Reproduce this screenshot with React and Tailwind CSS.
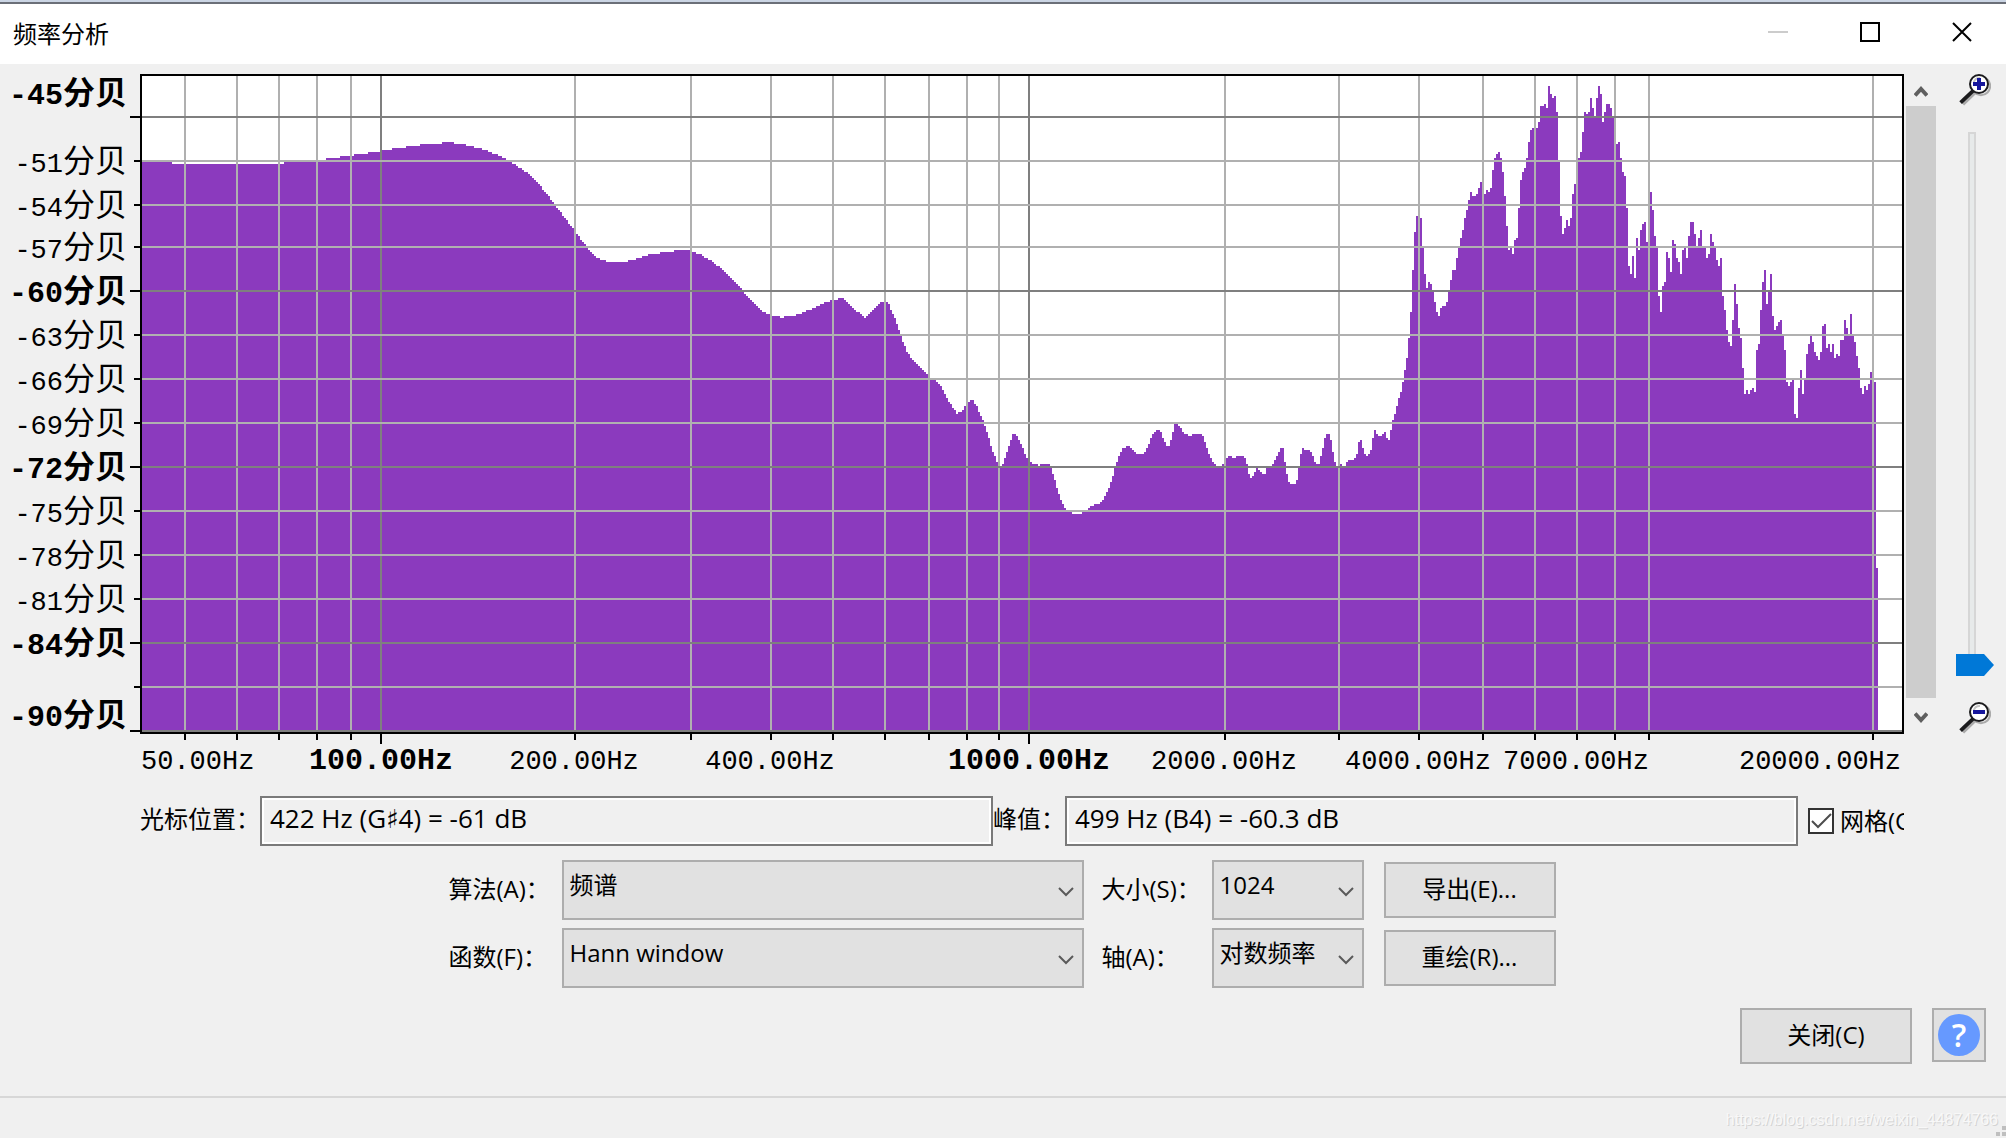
import React, { useState } from "react";

// [column, top] runs of the spectrum, two device pixels per unit
const SPECTRUM = [
  [71, 81], [86, 82], [142, 81], [163, 79], [170, 78], [177, 77], [184, 76], [191, 75], [196, 74], [203, 73],
  [210, 72], [221, 71], [227, 72], [233, 73], [237, 74], [241, 75], [244, 76], [246, 77], [249, 78], [251, 79],
  [253, 80], [256, 82], [258, 83], [259, 84], [261, 85], [262, 86], [264, 87], [265, 88], [266, 89], [267, 90],
  [268, 91], [269, 92], [270, 93], [271, 95], [272, 96], [273, 97], [274, 98], [275, 100], [276, 101], [277, 102],
  [278, 104], [279, 105], [280, 106], [281, 108], [282, 109], [283, 110], [284, 112], [285, 113], [286, 114],
  [287, 115], [288, 117], [289, 118], [290, 120], [291, 121], [292, 122], [293, 123], [294, 125], [295, 126],
  [296, 127], [297, 128], [298, 129], [300, 130], [303, 131], [314, 130], [318, 129], [321, 128], [324, 127],
  [330, 126], [337, 125], [346, 126], [348, 127], [351, 128], [352, 129], [354, 130], [356, 131], [357, 132],
  [358, 133], [360, 134], [361, 135], [362, 136], [363, 137], [364, 138], [365, 139], [366, 140], [367, 141],
  [368, 142], [369, 143], [370, 144], [371, 145], [372, 147], [373, 148], [374, 149], [375, 150], [376, 151],
  [377, 152], [378, 153], [379, 154], [380, 155], [381, 156], [383, 157], [386, 158], [390, 159], [392, 158],
  [398, 157], [401, 156], [403, 155], [406, 154], [408, 153], [410, 152], [412, 151], [415, 150], [419, 149],
  [422, 150], [423, 151], [424, 152], [425, 153], [426, 154], [427, 155], [428, 156], [430, 157], [431, 158],
  [432, 159], [433, 158], [434, 157], [435, 156], [436, 155], [437, 154], [438, 153], [439, 152], [440, 151],
  [444, 152], [445, 155], [446, 157], [447, 159], [448, 162], [449, 165], [450, 167], [451, 171], [452, 173],
  [453, 176], [454, 177], [455, 179], [456, 180], [457, 181], [458, 182], [459, 183], [460, 184], [461, 185],
  [462, 186], [463, 187], [464, 188], [465, 189], [468, 191], [469, 192], [470, 193], [471, 195], [472, 197],
  [473, 199], [474, 201], [475, 202], [476, 204], [477, 205], [478, 207], [479, 206], [481, 205], [482, 203],
  [483, 202], [484, 201], [485, 200], [487, 202], [488, 203], [489, 206], [490, 208], [491, 210], [492, 213],
  [493, 216], [494, 219], [495, 223], [496, 226], [497, 228], [498, 231], [499, 233], [501, 232], [502, 229],
  [503, 226], [504, 223], [505, 220], [506, 217], [508, 218], [509, 220], [510, 222], [511, 224], [512, 227],
  [513, 229], [515, 231], [516, 232], [519, 233], [520, 232], [525, 233], [526, 237], [527, 240], [528, 244],
  [529, 247], [530, 250], [531, 252], [532, 254], [533, 255], [536, 257], [541, 256], [542, 255], [544, 254],
  [545, 253], [547, 252], [550, 251], [551, 250], [552, 248], [553, 246], [554, 244], [555, 241], [556, 238],
  [557, 234], [558, 231], [559, 228], [560, 226], [561, 224], [563, 223], [565, 224], [566, 225], [567, 226],
  [568, 227], [572, 226], [573, 224], [574, 222], [575, 219], [576, 217], [577, 216], [578, 215], [580, 216],
  [581, 219], [582, 221], [583, 223], [585, 220], [586, 216], [587, 212], [589, 213], [590, 214], [591, 216],
  [592, 217], [594, 218], [596, 217], [601, 218], [602, 221], [603, 224], [604, 227], [605, 229], [606, 231],
  [607, 232], [608, 233], [611, 232], [613, 229], [614, 228], [616, 229], [618, 228], [622, 229], [623, 232],
  [624, 237], [625, 239], [626, 238], [627, 236], [628, 234], [629, 235], [630, 236], [631, 237], [633, 234],
  [636, 232], [637, 230], [638, 228], [639, 226], [640, 224], [642, 231], [643, 237], [644, 241], [645, 242],
  [648, 240], [649, 234], [650, 227], [651, 224], [652, 225], [655, 226], [656, 228], [657, 231], [658, 232],
  [660, 228], [661, 224], [662, 219], [663, 217], [665, 220], [666, 226], [667, 231], [668, 233], [670, 232],
  [671, 233], [673, 231], [674, 230], [677, 229], [678, 227], [679, 221], [680, 220], [681, 224], [682, 227],
  [683, 228], [684, 227], [685, 225], [686, 219], [687, 215], [688, 217], [689, 218], [691, 217], [692, 216],
  [693, 219], [694, 220], [695, 215], [696, 210], [697, 207], [698, 203], [699, 199], [700, 196], [701, 191],
  [702, 185], [703, 179], [704, 169], [705, 156], [706, 135], [707, 116], [708, 108], [710, 109], [711, 123],
  [712, 137], [713, 144], [714, 141], [715, 142], [716, 145], [717, 151], [718, 156], [719, 158], [720, 154],
  [721, 153], [723, 151], [724, 145], [725, 140], [726, 135], [728, 129], [729, 124], [730, 119], [731, 115],
  [732, 109], [733, 105], [734, 100], [735, 96], [736, 98], [738, 97], [739, 94], [740, 91], [742, 97],
  [743, 95], [744, 96], [745, 94], [746, 85], [747, 79], [748, 77], [749, 76], [750, 79], [751, 86], [752, 98],
  [753, 113], [754, 125], [755, 124], [756, 127], [757, 120], [758, 119], [759, 104], [760, 90], [761, 86],
  [762, 84], [763, 79], [764, 71], [765, 65], [766, 64], [769, 61], [770, 53], [772, 52], [773, 54], [774, 43],
  [775, 47], [776, 49], [777, 48], [778, 56], [779, 81], [780, 108], [781, 117], [782, 114], [783, 110],
  [784, 113], [785, 109], [786, 97], [787, 92], [788, 85], [789, 79], [790, 76], [791, 66], [792, 56], [793, 57],
  [794, 56], [795, 49], [796, 54], [797, 58], [798, 49], [799, 43], [800, 47], [801, 61], [802, 56], [803, 52],
  [805, 54], [806, 58], [808, 72], [809, 71], [810, 79], [811, 86], [812, 88], [813, 104], [814, 133],
  [815, 137], [816, 128], [817, 139], [818, 119], [819, 125], [820, 115], [821, 112], [822, 111], [823, 121],
  [825, 96], [826, 105], [827, 118], [828, 124], [829, 148], [830, 156], [831, 143], [832, 141], [833, 126],
  [834, 129], [835, 136], [836, 120], [837, 122], [838, 129], [839, 131], [840, 137], [841, 125], [842, 124],
  [843, 129], [844, 118], [845, 111], [847, 117], [848, 123], [849, 119], [850, 115], [851, 124], [853, 129],
  [854, 127], [855, 117], [856, 121], [857, 124], [858, 130], [859, 133], [860, 129], [861, 148], [862, 155],
  [863, 165], [864, 171], [865, 173], [866, 160], [867, 142], [868, 152], [869, 164], [870, 169], [871, 184],
  [872, 197], [873, 195], [874, 197], [875, 195], [876, 194], [877, 196], [878, 175], [879, 172], [880, 155],
  [881, 141], [882, 135], [883, 152], [884, 146], [885, 137], [886, 158], [887, 165], [888, 163], [889, 161],
  [890, 160], [891, 168], [892, 175], [893, 191], [894, 193], [895, 191], [896, 190], [897, 207], [898, 209],
  [899, 194], [900, 185], [901, 197], [902, 190], [903, 177], [904, 172], [905, 168], [906, 171], [907, 176],
  [908, 178], [909, 180], [910, 176], [911, 163], [912, 162], [913, 174], [914, 172], [915, 176], [916, 172],
  [917, 179], [918, 177], [919, 178], [920, 170], [922, 160], [923, 164], [924, 168], [925, 157], [926, 168],
  [927, 171], [928, 178], [929, 184], [930, 194], [931, 197], [932, 193], [933, 195], [934, 192], [935, 186],
  [937, 191], [938, 284],
];

const SPECTRUM_PATH =
  "M71 366" + SPECTRUM.map(([x, y]) => `H${x}V${y}`).join("") + "H939V366Z";

const DB_LINES = [
  { y: 117, major: true },
  { y: 161, label: "-51", textY: 172 },
  { y: 205, label: "-54", textY: 216 },
  { y: 247, label: "-57", textY: 258 },
  { y: 291, label: "-60", textY: 302, major: true },
  { y: 335, label: "-63", textY: 346 },
  { y: 379, label: "-66", textY: 390 },
  { y: 423, label: "-69", textY: 434 },
  { y: 467, label: "-72", textY: 478, major: true },
  { y: 511, label: "-75", textY: 522 },
  { y: 555, label: "-78", textY: 566 },
  { y: 599, label: "-81", textY: 610 },
  { y: 643, label: "-84", textY: 654, major: true },
  { y: 687 },
  { y: 731, label: "-90", textY: 726, major: true },
];

const HZ_LINES = [
  { x: 185 }, { x: 237 }, { x: 279 }, { x: 317 }, { x: 351 },
  { x: 381, major: true },
  { x: 575 }, { x: 691 }, { x: 771 }, { x: 833 }, { x: 885 }, { x: 929 }, { x: 967 }, { x: 999 },
  { x: 1029, major: true },
  { x: 1225 }, { x: 1339 }, { x: 1419 }, { x: 1483 }, { x: 1535 }, { x: 1577 }, { x: 1615 }, { x: 1649 },
  { x: 1873 },
];

const HZ_LABELS = [
  { x: 141, text: "50.00Hz", anchor: "start" },
  { x: 381, text: "100.00Hz", bold: true },
  { x: 574, text: "200.00Hz" },
  { x: 770, text: "400.00Hz" },
  { x: 1029, text: "1000.00Hz", bold: true },
  { x: 1224, text: "2000.00Hz" },
  { x: 1418, text: "4000.00Hz" },
  { x: 1576, text: "7000.00Hz" },
  { x: 1901, text: "20000.00Hz", anchor: "end" },
];

const lineColor = (major) => (major ? "#7f7f7f" : "#b0b0b0");

function DbLabel({ y, value, bold }) {
  return (
    <text
      x="127"
      y={y}
      textAnchor="end"
      className={bold ? "text-[30px] font-bold" : "text-[27px]"}
    >
      {value}
      <tspan className="text-[32px]">分贝</tspan>
    </text>
  );
}

function SpectrumChart() {
  return (
    <svg
      viewBox="0 64 1904 716"
      className="block w-full h-auto font-['Liberation_Mono','Noto_Sans_CJK_SC',monospace]"
      role="img"
      aria-label="频谱"
    >
      <rect x="141" y="75" width="1762" height="658" fill="#fff" />
      <path d={SPECTRUM_PATH} transform="scale(2)" fill="#8b3abe" shapeRendering="crispEdges" />
      <g strokeWidth="2" shapeRendering="crispEdges">
        {HZ_LINES.map(({ x, major }) => (
          <g key={x}>
            <line x1={x} x2={x} y1="76" y2="732" stroke={lineColor(major)} />
            <line x1={x} x2={x} y1="734" y2={major ? 744 : 740} stroke="#000" />
          </g>
        ))}
        {DB_LINES.map(({ y, major }) => (
          <g key={y}>
            <line x1="142" x2="1902" y1={y} y2={y} stroke={lineColor(major)} />
            <line x1={major ? 130 : 134} x2="140" y1={y} y2={y} stroke="#000" />
          </g>
        ))}
        <rect x="141" y="75" width="1762" height="658" fill="none" stroke="#000" />
      </g>
      <DbLabel y={104} value="-45" bold />
      {DB_LINES.filter((line) => line.label).map(({ label, textY, major }) => (
        <DbLabel key={label} y={textY} value={label} bold={major} />
      ))}
      {HZ_LABELS.map(({ x, text, anchor, bold }) => (
        <text
          key={text}
          x={x}
          y="769"
          textAnchor={anchor || "middle"}
          className={bold ? "text-[30px] font-bold" : "text-[27px]"}
        >
          {text}
        </text>
      ))}
    </svg>
  );
}

function ZoomIcon({ plus }) {
  return (
    <svg viewBox="0 0 16 16" className="w-8 h-8 shrink-0" fill="none">
      <g stroke="#ababab">
        <circle cx="11" cy="6" r="4.6" />
        <path d="M8.2 9.2L2 15.2" strokeWidth="1.6" />
      </g>
      <path d="M7 8.4L.8 14.3" stroke="#1b1b1d" strokeWidth="1.9" />
      <circle cx="10" cy="5" r="4.5" fill="#fff" stroke="#1b1b1d" />
      <path d="M7.4 4.2A3 3 0 0 1 10.5 2" stroke="#c4c4c4" />
      <path d={plus ? "M7 5h6M10 2v6" : "M7 5h6"} stroke="#16169c" strokeWidth="2" />
    </svg>
  );
}

function Chevron({ up, className }) {
  return (
    <svg viewBox="0 0 14 12" className={className} fill="none" stroke="#5f5f5f">
      <path d={up ? "M1 10.5L7 4L13 10.5" : "M1 1.5L7 8L13 1.5"} strokeWidth="4" />
    </svg>
  );
}

function ReadOut({ id, label, labelClass, value }) {
  return (
    <>
      <label htmlFor={id} className={`shrink-0 pb-1 whitespace-nowrap ${labelClass}`}>
        {label}
      </label>
      <input
        id={id}
        readOnly
        value={value}
        className="flex-1 min-w-0 h-[50px] border-2 border-[#7a7a7a] bg-[#f0f0f0] px-2 pb-1.5 shadow-[inset_0_0_0_2px_#fff] outline-none text-[26px] font-['Open_Sans','DejaVu_Sans',sans-serif]"
      />
    </>
  );
}

function Choice({ id, label, labelClass, selectClass, options }) {
  return (
    <>
      <label htmlFor={id} className={`shrink-0 pb-0.5 whitespace-nowrap ${labelClass}`}>
        {label}
      </label>
      <div className={`relative shrink-0 mr-[18px] ${selectClass}`}>
        <select
          id={id}
          className="w-full h-[60px] appearance-none border-2 border-[#adadad] bg-[#e1e1e1] pl-1.5 pr-9 pb-2.5 outline-none"
        >
          {options.map((option) => (
            <option key={option}>{option}</option>
          ))}
        </select>
        <svg
          viewBox="0 0 16 10"
          className="absolute right-2.5 top-[27px] w-4 h-2.5 pointer-events-none"
          fill="none"
          stroke="#5a5a5a"
          strokeWidth="2"
        >
          <path d="M1 1L8 8L15 1" />
        </svg>
      </div>
    </>
  );
}

function PushButton({ className, children }) {
  return (
    <button
      className={`h-14 shrink-0 pb-0.5 border-2 border-[#adadad] bg-[#e1e1e1] hover:border-[#0078d7] hover:bg-[#e5f1fb] ${className}`}
    >
      {children}
    </button>
  );
}

function TitleBar() {
  return (
    <header className="flex items-center h-16 pb-0.5 bg-white border-t-2 border-[#cbd5e4] shadow-[inset_0_2px_0_#6b6f78]">
      <h1 className="flex-1 pl-[13px] pt-1">频率分析</h1>
      <button aria-label="最小化" className="w-[92px] h-full flex items-center justify-center">
        <svg viewBox="0 0 20 20" className="w-5 h-5" stroke="#ccc" strokeWidth="2">
          <path d="M0 10H20" />
        </svg>
      </button>
      <button aria-label="最大化" className="w-[92px] h-full flex items-center justify-center">
        <svg viewBox="0 0 20 20" className="w-5 h-5" fill="none" stroke="#000" strokeWidth="2">
          <path d="M1 1H19V19H1Z" />
        </svg>
      </button>
      <button aria-label="关闭" className="w-[92px] h-full -mr-0.5 flex items-center justify-center">
        <svg viewBox="0 0 20 20" className="w-5 h-5" stroke="#000" strokeWidth="2">
          <path d="M1 1L19 19M19 1L1 19" />
        </svg>
      </button>
    </header>
  );
}

export default function App() {
  const [grid, setGrid] = useState(true);
  const [zoom, setZoom] = useState(0);

  return (
    <div className="min-h-screen flex flex-col overflow-hidden bg-[#f0f0f0] text-black text-2xl font-['Open_Sans','Noto_Sans_CJK_SC',sans-serif]">
      <TitleBar />

      <div className="flex">
        <div className="flex-1 min-w-0">
          <SpectrumChart />
        </div>
        <div className="flex flex-col items-center w-[30px] ml-0.5 mt-2.5 mb-[46px]">
          <button aria-label="向上" className="h-8 w-full pt-0.5 flex items-center justify-center">
            <Chevron up className="w-3.5 h-3" />
          </button>
          <div className="flex-1 w-full bg-[#cdcdcd]"></div>
          <button aria-label="向下" className="h-9 w-full pt-1 flex items-center justify-center">
            <Chevron className="w-3.5 h-3" />
          </button>
        </div>
        <div className="flex flex-col items-center w-[70px] pt-2.5 pb-[46px] pl-2">
          <ZoomIcon plus />
          <input
            type="range"
            aria-label="缩放"
            value={zoom}
            onChange={(e) => setZoom(Number(e.target.value))}
            className="flex-1 min-h-0 w-2 mt-[26px] mb-[26px] mr-1.5 appearance-none [writing-mode:vertical-lr] [direction:rtl] bg-[#e7eaea] border-2 border-b-0 border-[#d6d6d6] outline-none [&::-webkit-slider-thumb]:appearance-none [&::-webkit-slider-thumb]:w-[38px] [&::-webkit-slider-thumb]:h-[22px] [&::-webkit-slider-thumb]:ml-1.5 [&::-webkit-slider-thumb]:bg-[#0078d7] [&::-webkit-slider-thumb]:[clip-path:polygon(0_0,28px_0,38px_50%,28px_100%,0_100%)]"
          />
          <ZoomIcon />
        </div>
      </div>

      <main className="flex flex-col">
        <div className="flex items-center mt-4 pl-[140px] pr-[102px]">
          <ReadOut id="cursor" label="光标位置：" labelClass="w-[120px]" value="422 Hz (G♯4) = -61 dB" />
          <ReadOut id="peak" label="峰值：" labelClass="w-[72px]" value="499 Hz (B4) = -60.3 dB" />
          <label className="flex items-center shrink-0 w-24 ml-2.5 overflow-hidden whitespace-nowrap">
            <span className="relative shrink-0 w-[26px] h-[26px] mr-1.5">
              <input
                type="checkbox"
                checked={grid}
                onChange={(e) => setGrid(e.target.checked)}
                className="block w-full h-full appearance-none border-2 border-[#333] bg-white"
              />
              {grid && (
                <svg
                  viewBox="0 0 26 26"
                  className="absolute inset-0 pointer-events-none"
                  fill="none"
                  stroke="#4d4d4d"
                  strokeWidth="2"
                >
                  <path d="M4 13L10 19L23 6" />
                </svg>
              )}
            </span>
            网格(G)
          </label>
        </div>

        <div className="flex items-center justify-center mt-3.5 pr-0.5">
          <Choice
            id="algorithm"
            label="算法(A)："
            labelClass="w-[113px]"
            selectClass="w-[522px]"
            options={["频谱", "标准自相关", "倒频谱"]}
          />
          <Choice
            id="size"
            label="大小(S)："
            labelClass="w-[110px]"
            selectClass="w-[152px]"
            options={["1024", "2048", "4096"]}
          />
          <PushButton className="w-[172px] ml-0.5">导出(E)...</PushButton>
        </div>

        <div className="flex items-center justify-center mt-2 pr-0.5">
          <Choice
            id="window"
            label="函数(F)："
            labelClass="w-[113px]"
            selectClass="w-[522px]"
            options={["Hann window", "Hamming window", "Blackman window"]}
          />
          <Choice
            id="axis"
            label="轴(A)："
            labelClass="w-[110px]"
            selectClass="w-[152px]"
            options={["对数频率", "线性频率"]}
          />
          <PushButton className="w-[172px] ml-0.5">重绘(R)...</PushButton>
        </div>

        <div className="flex justify-end gap-5 mt-5 pr-5">
          <PushButton className="w-[172px]">关闭(C)</PushButton>
          <button
            aria-label="帮助"
            className="flex items-center justify-center w-[54px] h-[54px] border-2 border-[#adadad] bg-[#e1e1e1]"
          >
            <span className="flex items-center justify-center w-[42px] h-[42px] rounded-full bg-[#6699ff] text-white text-[32px] leading-none font-semibold">
              ?
            </span>
          </button>
        </div>
      </main>

      <footer className="relative flex items-center justify-end h-[42px] mt-auto pr-2 border-t-2 border-[#d7d7d7]">
        <span className="pt-1 text-base text-[#f8f8f8] font-['Liberation_Sans',sans-serif] [text-shadow:1px_1px_0_#d4d4d4]">
          https://blog.csdn.net/weixin_44874766
        </span>
        <svg viewBox="0 0 10 10" className="absolute right-0 bottom-0.5 w-2.5 h-2.5" fill="#bfbfbf">
          <path d="M6 0h4v4h-4zM6 6h4v4h-4zM0 6h4v4h-4z" />
        </svg>
      </footer>
    </div>
  );
}
